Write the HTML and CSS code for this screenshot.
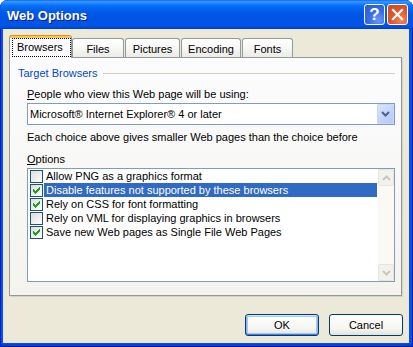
FILE: index.html
```html
<!DOCTYPE html>
<html>
<head>
<meta charset="utf-8">
<title>Web Options</title>
<link rel="stylesheet" href="styles.css">
</head>
<body>
<div class="window">
  <div class="titlebar">
    <span class="title">Web Options</span>
    <div class="cap help">?</div>
    <div class="cap close">
      <svg width="13" height="13" viewBox="0 0 13 13"><path d="M2 2 L11 11 M11 2 L2 11" stroke="#fff" stroke-width="2.2" stroke-linecap="square"/></svg>
    </div>
  </div>
  <div class="client">
    <div class="tabs">
      <div class="tab active w-browsers"><span class="focus">Browsers</span></div>
      <div class="tab w-files">Files</div>
      <div class="tab w-pictures">Pictures</div>
      <div class="tab w-encoding">Encoding</div>
      <div class="tab w-fonts">Fonts</div>
    </div>
    <div class="panel">
      <div class="group"><span>Target Browsers</span><div class="rule"></div></div>
      <div class="indent">
        <div class="label l1"><u>P</u>eople who view this Web page will be using:</div>
        <div class="combo">
          <span class="val">Microsoft® Internet Explorer® 4 or later</span>
          <div class="combo-btn">
            <svg width="9" height="6" viewBox="0 0 9 6"><path d="M1 1 L4.5 4.5 L8 1" fill="none" stroke="#4D6185" stroke-width="2"/></svg>
          </div>
        </div>
        <div class="label l2">Each choice above gives smaller Web pages than the choice before</div>
        <div class="label l3"><u>O</u>ptions</div>
        <div class="listbox">
          <div class="items">
            <div class="row"><span class="chk"></span><span class="txt">Allow PNG as a graphics format</span></div>
            <div class="row sel"><span class="chk on"><svg width="11" height="11" viewBox="0 0 11 11"><path d="M2 4h1v3h-1z M3 5h1v3h-1z M4 6h1v3h-1z M5 5h1v3h-1z M6 4h1v3h-1z M7 3h1v3h-1z M8 2h1v3h-1z" fill="#21A121"/></svg></span><span class="txt">Disable features not supported by these browsers</span></div>
            <div class="row"><span class="chk on"><svg width="11" height="11" viewBox="0 0 11 11"><path d="M2 4h1v3h-1z M3 5h1v3h-1z M4 6h1v3h-1z M5 5h1v3h-1z M6 4h1v3h-1z M7 3h1v3h-1z M8 2h1v3h-1z" fill="#21A121"/></svg></span><span class="txt">Rely on CSS for font formatting</span></div>
            <div class="row"><span class="chk"></span><span class="txt">Rely on VML for displaying graphics in browsers</span></div>
            <div class="row"><span class="chk on"><svg width="11" height="11" viewBox="0 0 11 11"><path d="M2 4h1v3h-1z M3 5h1v3h-1z M4 6h1v3h-1z M5 5h1v3h-1z M6 4h1v3h-1z M7 3h1v3h-1z M8 2h1v3h-1z" fill="#21A121"/></svg></span><span class="txt">Save new Web pages as Single File Web Pages</span></div>
          </div>
          <div class="scrollbar">
            <div class="sb-btn"><svg width="9" height="6" viewBox="0 0 9 6"><path d="M1 5 L4.5 1.5 L8 5" fill="none" stroke="#C9C7BA" stroke-width="2"/></svg></div>
            <div class="sb-track"></div>
            <div class="sb-btn"><svg width="9" height="6" viewBox="0 0 9 6"><path d="M1 1 L4.5 4.5 L8 1" fill="none" stroke="#C9C7BA" stroke-width="2"/></svg></div>
          </div>
        </div>
      </div>
    </div>
    <div class="buttons">
      <div class="btn default">OK</div>
      <div class="btn">Cancel</div>
    </div>
  </div>
</div>
</body>
</html>
```
FILE: styles.css
```css
* { box-sizing: border-box; }
html, body { margin: 0; padding: 0; }
body {
  width: 413px; height: 347px; overflow: hidden; background: #fff;
  font-family: "Liberation Sans", Arial, sans-serif; font-size: 11px; color: #000;
}
.window {
  width: 413px; height: 347px; display: flex; flex-direction: column;
  background: #0851E6; border-radius: 8px 8px 0 0; overflow: hidden;
  box-shadow: inset 1px 0 0 #0019CF, inset -1px 0 0 #001CA8, inset 0 -1px 0 #001B9A, inset 0 -3px 0 #0A3FD0;
}
.titlebar {
  height: 29px; flex: none; display: flex; align-items: center; padding: 0 5px 0 7px;
  background: linear-gradient(#0058EE 0, #3A93FF 1px, #288EFF 3px, #127DFF 4px, #036FFC 6px, #0262EE 9px, #0057E5 14px, #0054E3 21px, #0055EB 25px, #0048D6 28px, #003DC0 29px);
}
.title {
  flex: 1; color: #fff; font-weight: bold; font-size: 13px; padding-top: 1px;
  text-shadow: 1px 1px 0 #0A1E8A;
}
.cap {
  width: 21px; height: 21px; border: 1px solid #fff; border-radius: 3px; margin-left: 2px;
  display: flex; align-items: center; justify-content: center; color: #fff;
}
.help {
  background: radial-gradient(circle at 70% 80%, #6D97F7 0, #3A6CE6 45%, #2A5AD8 100%);
  font-weight: bold; font-size: 17px; line-height: 19px;
}
.close {
  background: radial-gradient(circle at 70% 80%, #F0875E 0, #E05A2C 45%, #CD4620 100%);
}
.client {
  flex: 1; margin: 0 4px 4px 3px; background: #ECE9D8;
  padding: 6px 0 0 6px; display: flex; flex-direction: column;
}
.tabs { display: flex; align-items: flex-end; height: 22px; position: relative; z-index: 1; }
.tab {
  height: 19px; border: 1px solid #919B9C; border-bottom: none; border-radius: 3px 3px 0 0;
  background: linear-gradient(#FFFFFF, #F7F7F4 50%, #ECEBE5);
  display: flex; align-items: center; justify-content: center; padding-top: 2px; margin-left: 1px;
}
.tab.active {
  height: 23px; margin-bottom: -1px; margin-left: 0; border-top: none; padding-top: 2px;
  background: linear-gradient(#E68B2C 0, #E68B2C 1px, #FFC73C 1px, #FFC73C 3px, #FCFCFE 3px);
  justify-content: flex-start; padding-left: 3px;
}
.focus { outline: 1px dotted #000; outline-offset: 0; padding: 2px 4px 2px 4px; line-height: 13px; width: 57px; }
.w-browsers { width: 63px; }
.w-files { width: 52px; margin-left: 0; }
.w-pictures { width: 55px; }
.w-encoding { width: 60px; }
.w-fonts { width: 51px; }
.panel {
  width: 393px; height: 239px; border: 1px solid #919B9C;
  background: linear-gradient(#FCFCFE, #F4F3EE);
  padding: 9px 6px 0 8px; box-shadow: 1px 1px 0 #D6D3C4;
}
.group { display: flex; align-items: center; height: 13px; line-height: 13px; color: #0046D5; }
.group .rule { flex: 1; height: 1px; background: #D0D0BF; margin-left: 6px; }
.indent { padding-left: 9px; }
.label { height: 13px; line-height: 13px; }
.l1 { margin-top: 8px; }
.l2 { margin-top: 6px; }
.l3 { margin-top: 9px; }
.combo {
  margin-top: 2px; height: 22px; border: 1px solid #7F9DB9; background: #fff;
  display: flex; align-items: center; padding-left: 2px;
}
.combo .val { flex: 1; }
.combo-btn {
  width: 17px; height: 20px; margin-right: 0; border-radius: 2px;
  background: linear-gradient(135deg, #DCE6FD, #C0D2FA 60%, #B3C8F7);
  box-shadow: inset 0 0 0 1px #C9D7F9;
  display: flex; align-items: center; justify-content: center;
}
.listbox {
  margin-top: 2px; height: 114px; border: 1px solid #7F9DB9; background: #fff; display: flex;
}
.items { flex: 1; padding-right: 1px; }
.row { height: 14px; display: flex; align-items: flex-start; }
.chk {
  width: 13px; height: 13px; margin: 1px 1px 0 2px; flex: none;
  border: 1px solid #1C5180; background: linear-gradient(135deg, #DCDCD7, #FFFFFF);
  display: flex;
}
.txt { flex: 1; height: 14px; line-height: 14px; padding-left: 2px; }
.sel .txt { background: #316AC5; color: #fff; }
.scrollbar {
  width: 16px; display: flex; flex-direction: column; background: #FAF9F4;
}
.sb-btn {
  height: 17px; border: 1px solid #E6E5DD; border-radius: 2px; background: #F2F1EB;
  display: flex; align-items: center; justify-content: center;
}
.sb-track { flex: 1; }
.buttons { display: flex; justify-content: flex-end; gap: 10px; margin-top: 18px; padding-right: 6px; }
.btn {
  width: 74px; height: 22px; border: 1px solid #003C74; border-radius: 3px;
  background: linear-gradient(#FFFFFF, #F5F5F1 70%, #E4E3DB);
  display: flex; align-items: center; justify-content: center;
}
.btn.default {
  box-shadow: inset 0 1px 0 #CEE7FF, inset 0 -1px 0 #3D7BEF, inset 1px 0 0 #8AB4F2, inset -1px 0 0 #8AB4F2, inset 0 0 0 2px #A8C6F4;
}
```
